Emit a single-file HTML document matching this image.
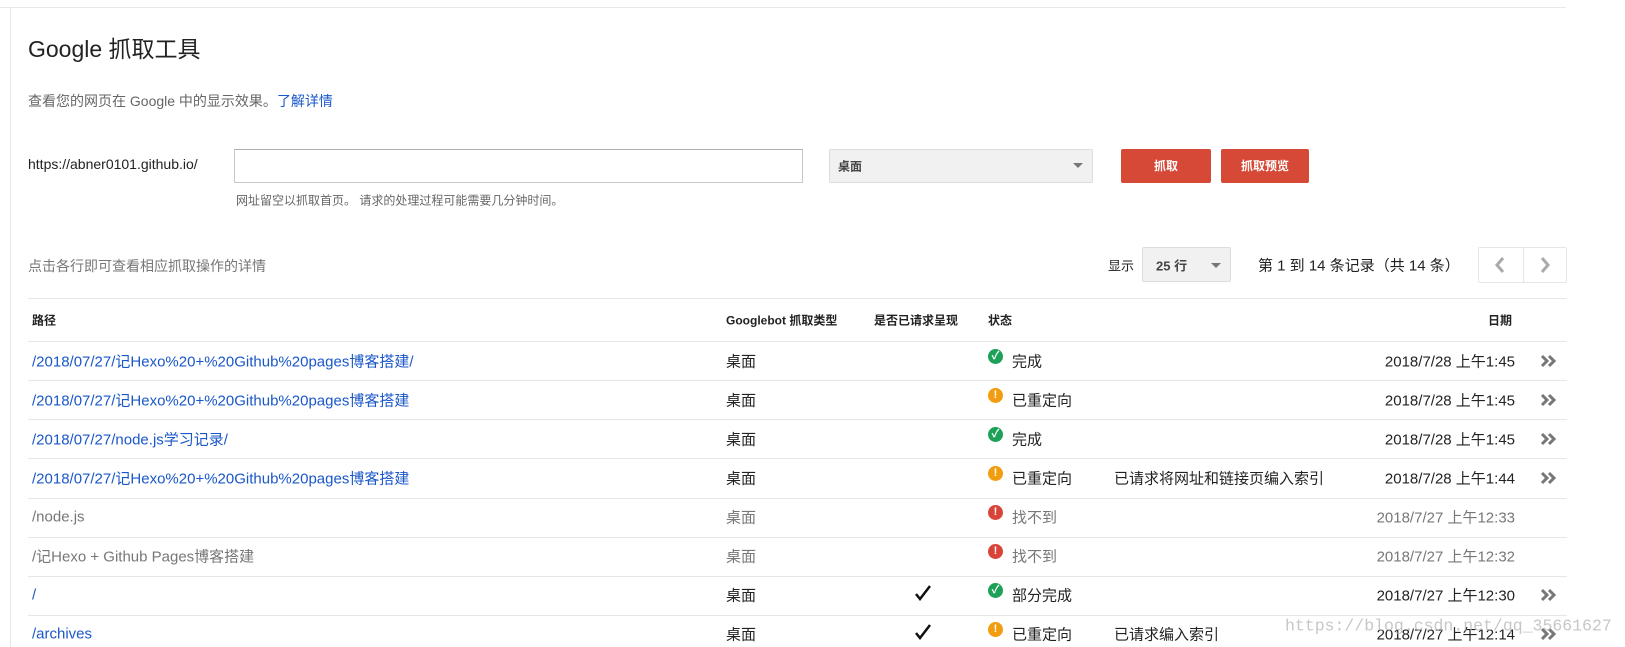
<!DOCTYPE html>
<html><head><meta charset="utf-8"><style>
*{margin:0;padding:0;box-sizing:border-box}
body{width:1625px;height:644px;background:#fff;position:relative;overflow:hidden;font-family:"Liberation Sans","Noto Sans CJK SC",sans-serif;color:#222}
.a{position:absolute;white-space:nowrap}
.c{transform:translateY(-50%)}
.ln{position:absolute;left:28px;width:1539px;height:1px;background:#e6e6e6}
.lk{color:#1a57c9}
.g{color:#777}
.r{font-size:15px}
.ico{position:absolute;width:15px;height:15px;border-radius:50%;color:#fff;font-size:11px;font-weight:bold;text-align:center;line-height:15px}
.ok{background:#1da158}.wa{background:#f29d0f}.er{background:#d9443a}
.chev{position:absolute}
</style></head><body>
<div class="a" style="left:0;top:7px;width:1566px;height:1px;background:#e8e8e8"></div>
<div class="a" style="left:10px;top:7px;width:1px;height:640px;background:#e8e8e8"></div>

<div class="a c" style="left:28px;top:47px;font-size:23px">Google 抓取工具</div>
<div class="a c" style="left:28px;top:101px;font-size:14px;color:#666">查看您的网页在 Google 中的显示效果。<span class="lk">了解详情</span></div>

<div class="a c" style="left:28px;top:164px;font-size:14px">https://abner0101.github.io/</div>
<div class="a" style="left:234px;top:149px;width:569px;height:34px;border:1px solid #c8c8c8;border-top-color:#b0b0b0"></div>
<div class="a c" style="left:236px;top:200px;font-size:12px;color:#666">网址留空以抓取首页。 请求的处理过程可能需要几分钟时间。</div>
<div class="a" style="left:829px;top:149px;width:264px;height:34px;border:1px solid #dcdcdc;background:#f1f1f1;border-radius:2px"></div>
<div class="a c" style="left:838px;top:166px;font-size:12px;font-weight:bold;color:#444">桌面</div>
<div class="a" style="left:1073px;top:163px;border-left:5px solid transparent;border-right:5px solid transparent;border-top:5px solid #777"></div>
<div class="a" style="left:1121px;top:149px;width:90px;height:34px;background:#d74937;border-radius:2px;color:#fff;font-size:12px;font-weight:bold;text-align:center;line-height:34px">抓取</div>
<div class="a" style="left:1221px;top:149px;width:88px;height:34px;background:#d74937;border-radius:2px;color:#fff;font-size:12px;font-weight:bold;text-align:center;line-height:34px">抓取预览</div>

<div class="a c" style="left:28px;top:266px;font-size:14px;color:#777">点击各行即可查看相应抓取操作的详情</div>
<div class="a c" style="left:1108px;top:265px;font-size:13px">显示</div>
<div class="a" style="left:1142px;top:247px;width:89px;height:35px;border:1px solid #dcdcdc;background:#f1f1f1;border-radius:2px"></div>
<div class="a c" style="left:1156px;top:265px;font-size:13px;font-weight:bold;color:#444">25 行</div>
<div class="a" style="left:1211px;top:263px;border-left:5px solid transparent;border-right:5px solid transparent;border-top:5px solid #777"></div>
<div class="a c" style="left:1258px;top:265px;font-size:15px">第 1 到 14 条记录（共 14 条）</div>
<div class="a" style="left:1478px;top:247px;width:89px;height:36px;border:1px solid #e6e6e6;border-radius:2px"></div>
<div class="a" style="left:1523px;top:247px;width:1px;height:36px;background:#e6e6e6"></div>
<svg class="a" style="left:1492px;top:255px" width="16" height="20"><path d="M11 3 L5 10 L11 17" fill="none" stroke="#aaa" stroke-width="3"/></svg>
<svg class="a" style="left:1537px;top:255px" width="16" height="20"><path d="M5 3 L11 10 L5 17" fill="none" stroke="#aaa" stroke-width="3"/></svg>

<div class="ln" style="top:298px"></div>
<div class="a c" style="left:32px;top:320px;font-size:12px;font-weight:bold">路径</div>
<div class="a c" style="left:726px;top:320px;font-size:12px;font-weight:bold">Googlebot 抓取类型</div>
<div class="a c" style="left:874px;top:320px;font-size:12px;font-weight:bold">是否已请求呈现</div>
<div class="a c" style="left:988px;top:320px;font-size:12px;font-weight:bold">状态</div>
<div class="a c" style="left:1488px;top:320px;font-size:12px;font-weight:bold">日期</div>
<div class="ln" style="top:341px"></div>
<div class="ln" style="top:380px"></div>
<div class="ln" style="top:419px"></div>
<div class="ln" style="top:458px"></div>
<div class="ln" style="top:498px"></div>
<div class="ln" style="top:537px"></div>
<div class="ln" style="top:576px"></div>
<div class="ln" style="top:615px"></div>

<div class="a c r lk" style="left:32px;top:361px">/2018/07/27/记Hexo%20+%20Github%20pages博客搭建/</div>
<div class="a c r" style="left:726px;top:361px">桌面</div>
<div class="ico ok" style="left:988px;top:349px">✓</div>
<div class="a c r" style="left:1012px;top:361px">完成</div>
<div class="a c r" style="right:110px;top:361px">2018/7/28 上午1:45</div>
<svg class="chev" style="left:1540px;top:354px" width="18" height="14"><path d="M2 2 L7 7 L2 12 M9 2 L14 7 L9 12" fill="none" stroke="#777" stroke-width="3"/></svg>

<div class="a c r lk" style="left:32px;top:400px">/2018/07/27/记Hexo%20+%20Github%20pages博客搭建</div>
<div class="a c r" style="left:726px;top:400px">桌面</div>
<div class="ico wa" style="left:988px;top:388px">!</div>
<div class="a c r" style="left:1012px;top:400px">已重定向</div>
<div class="a c r" style="right:110px;top:400px">2018/7/28 上午1:45</div>
<svg class="chev" style="left:1540px;top:393px" width="18" height="14"><path d="M2 2 L7 7 L2 12 M9 2 L14 7 L9 12" fill="none" stroke="#777" stroke-width="3"/></svg>

<div class="a c r lk" style="left:32px;top:439px">/2018/07/27/node.js学习记录/</div>
<div class="a c r" style="left:726px;top:439px">桌面</div>
<div class="ico ok" style="left:988px;top:427px">✓</div>
<div class="a c r" style="left:1012px;top:439px">完成</div>
<div class="a c r" style="right:110px;top:439px">2018/7/28 上午1:45</div>
<svg class="chev" style="left:1540px;top:432px" width="18" height="14"><path d="M2 2 L7 7 L2 12 M9 2 L14 7 L9 12" fill="none" stroke="#777" stroke-width="3"/></svg>

<div class="a c r lk" style="left:32px;top:478px">/2018/07/27/记Hexo%20+%20Github%20pages博客搭建</div>
<div class="a c r" style="left:726px;top:478px">桌面</div>
<div class="ico wa" style="left:988px;top:466px">!</div>
<div class="a c r" style="left:1012px;top:478px">已重定向</div>
<div class="a c r" style="left:1114px;top:478px">已请求将网址和链接页编入索引</div>
<div class="a c r" style="right:110px;top:478px">2018/7/28 上午1:44</div>
<svg class="chev" style="left:1540px;top:471px" width="18" height="14"><path d="M2 2 L7 7 L2 12 M9 2 L14 7 L9 12" fill="none" stroke="#777" stroke-width="3"/></svg>

<div class="a c r g" style="left:32px;top:517px">/node.js</div>
<div class="a c r g" style="left:726px;top:517px">桌面</div>
<div class="ico er" style="left:988px;top:505px">!</div>
<div class="a c r g" style="left:1012px;top:517px">找不到</div>
<div class="a c r g" style="right:110px;top:517px">2018/7/27 上午12:33</div>

<div class="a c r g" style="left:32px;top:556px">/记Hexo + Github Pages博客搭建</div>
<div class="a c r g" style="left:726px;top:556px">桌面</div>
<div class="ico er" style="left:988px;top:544px">!</div>
<div class="a c r g" style="left:1012px;top:556px">找不到</div>
<div class="a c r g" style="right:110px;top:556px">2018/7/27 上午12:32</div>

<div class="a c r lk" style="left:32px;top:595px">/</div>
<div class="a c r" style="left:726px;top:595px">桌面</div>
<svg class="a" style="left:914px;top:585px" width="18" height="16"><path d="M2 9 L6 14 L16 1" fill="none" stroke="#111" stroke-width="2.5"/></svg>
<div class="ico ok" style="left:988px;top:583px">✓</div>
<div class="a c r" style="left:1012px;top:595px">部分完成</div>
<div class="a c r" style="right:110px;top:595px">2018/7/27 上午12:30</div>
<svg class="chev" style="left:1540px;top:588px" width="18" height="14"><path d="M2 2 L7 7 L2 12 M9 2 L14 7 L9 12" fill="none" stroke="#777" stroke-width="3"/></svg>

<div class="a c r lk" style="left:32px;top:634px">/archives</div>
<div class="a c r" style="left:726px;top:634px">桌面</div>
<svg class="a" style="left:914px;top:624px" width="18" height="16"><path d="M2 9 L6 14 L16 1" fill="none" stroke="#111" stroke-width="2.5"/></svg>
<div class="ico wa" style="left:988px;top:622px">!</div>
<div class="a c r" style="left:1012px;top:634px">已重定向</div>
<div class="a c r" style="left:1114px;top:634px">已请求编入索引</div>
<div class="a c r" style="right:110px;top:634px">2018/7/27 上午12:14</div>
<svg class="chev" style="left:1540px;top:627px" width="18" height="14"><path d="M2 2 L7 7 L2 12 M9 2 L14 7 L9 12" fill="none" stroke="#777" stroke-width="3"/></svg>

<div class="a c" style="left:1285px;top:626px;font-family:'Liberation Mono',monospace;font-size:16.5px;color:rgba(180,180,180,0.75)">https://blog.csdn.net/qq_35661627</div>
</body></html>
